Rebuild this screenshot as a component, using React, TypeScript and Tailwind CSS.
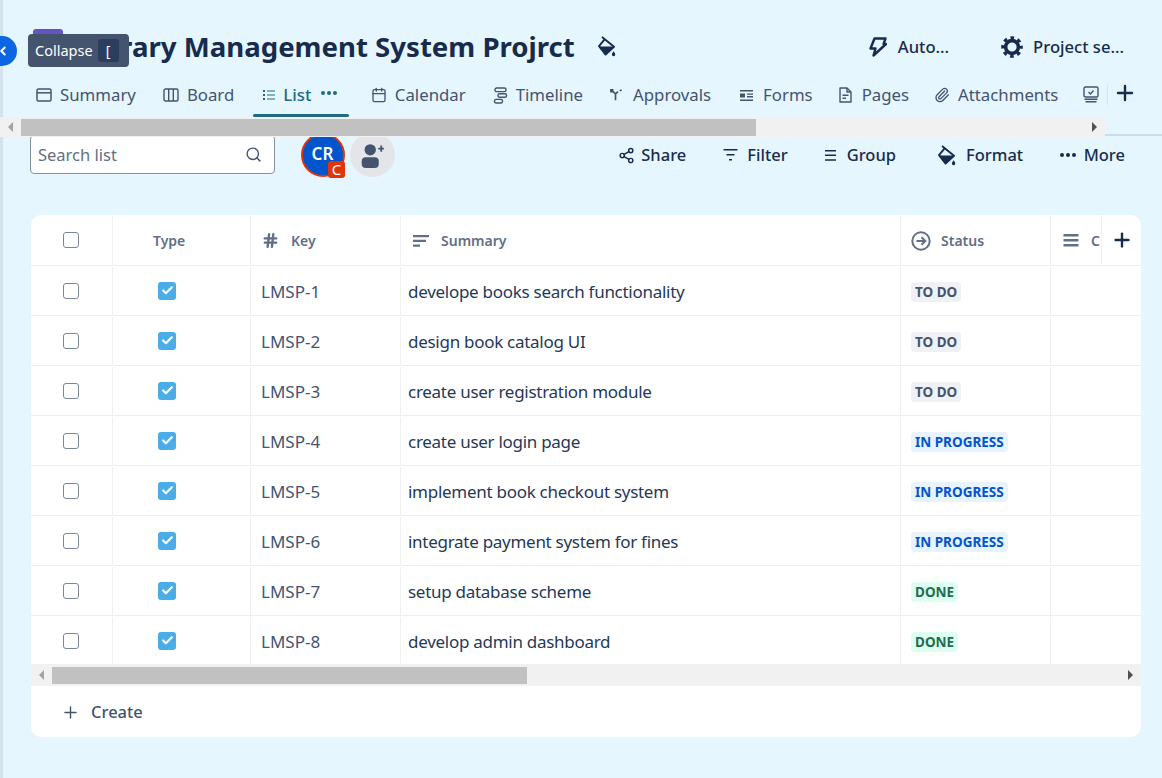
import { Calendar, Check, ChevronLeft, Hash, Paperclip, Plus, Search, Share2 } from "lucide-react";
import type { ReactNode } from "react";

const ROWS = [
  { key: "LMSP-1", summary: "develope books search functionality", status: "TO DO" },
  { key: "LMSP-2", summary: "design book catalog UI", status: "TO DO" },
  { key: "LMSP-3", summary: "create user registration module", status: "TO DO" },
  { key: "LMSP-4", summary: "create user login page", status: "IN PROGRESS" },
  { key: "LMSP-5", summary: "implement book checkout system", status: "IN PROGRESS" },
  { key: "LMSP-6", summary: "integrate payment system for fines", status: "IN PROGRESS" },
  { key: "LMSP-7", summary: "setup database scheme", status: "DONE" },
  { key: "LMSP-8", summary: "develop admin dashboard", status: "DONE" },
];

const STATUS_STYLE: Record<string, string> = {
  "TO DO": "bg-[#f0f1f4] text-[#44546f]",
  "IN PROGRESS": "bg-[#e9f2ff] text-[#0055cc]",
  DONE: "bg-[#dcfff1] text-[#216e4e]",
};

function Bucket({ className }: { className?: string }) {
  return (
    <svg viewBox="0 0 18 21" className={className} fill="none">
      <path d="M4 1 16 10.8 7.6 18.6 1 10.2 6.6 3.4" stroke="currentColor" strokeWidth="1.9" strokeLinejoin="round" />
      <path d="M1 10.6h15L7.6 18.6Z" fill="currentColor" />
      <path d="M15.6 15.2c-1 1.5-1.7 2.4-1.7 3.3a1.7 1.7 0 0 0 3.4 0c0-.9-.7-1.8-1.7-3.3Z" fill="currentColor" />
    </svg>
  );
}

function Bolt({ className }: { className?: string }) {
  return (
    <svg viewBox="0 0 18 20" className={className} fill="none" stroke="currentColor" strokeWidth="2.4" strokeLinejoin="round">
      <path d="M5.5 1.5H16.5L14.6 7H17L4.5 18.5 6.5 11.5H1.5Z" />
    </svg>
  );
}

function Gear({ className }: { className?: string }) {
  return (
    <svg viewBox="0 0 22 22" className={className} fill="none" stroke="currentColor">
      <circle cx="11" cy="11" r="6.4" strokeWidth="3.6" />
      <circle cx="11" cy="11" r="9.2" strokeWidth="3.2" strokeDasharray="3.6 3.63" strokeDashoffset="1.8" />
    </svg>
  );
}

function PanelIcon() {
  return (
    <svg viewBox="0 0 16 14" className="h-[14px] w-4" fill="none" stroke="currentColor" strokeWidth="1.5">
      <rect x="1" y="1" width="14" height="12" rx="1.5" />
      <path d="M1 4.8h14" />
    </svg>
  );
}

function BoardIcon() {
  return (
    <svg viewBox="0 0 16 14" className="h-[14px] w-4" fill="none" stroke="currentColor" strokeWidth="1.4">
      <rect x="1" y="1" width="14" height="12" rx="1.5" />
      <path d="M5.7 1v12M10.3 1v12" />
    </svg>
  );
}

function ListIcon() {
  return (
    <svg viewBox="0 0 12 10" className="h-[10px] w-3" fill="currentColor">
      <path d="M0 0h2v2H0zM4 .4h8v1.2H4zM0 4h2v2H0zM4 4.4h8v1.2H4zM0 8h2v2H0zM4 8.4h8v1.2H4z" />
    </svg>
  );
}

function TimelineIcon() {
  return (
    <svg viewBox="0 0 14 17" className="h-[17px] w-[15px]" fill="none" stroke="currentColor" strokeWidth="1.4">
      <rect x="1.5" y="1" width="11" height="3.6" rx="1.6" />
      <rect x="4.5" y="6.7" width="8.5" height="3.6" rx="1.6" />
      <rect x="1" y="12.4" width="8" height="3.6" rx="1.6" />
    </svg>
  );
}

function ApprovalsIcon() {
  return (
    <svg viewBox="0 0 13 12" className="mr-[2px] h-3 w-[13px]" fill="none" stroke="currentColor" strokeWidth="1.7">
      <path d="M1.5 1.2 5.5 4.8v6.5M5.5 5 8 2.6M9.8 1.8 11.6 1" />
      <path d="M0 0h3.4v3.4H0z" fill="currentColor" stroke="none" />
    </svg>
  );
}

function FormsIcon() {
  return (
    <svg viewBox="0 0 13 11" className="mr-[2px] h-[11px] w-[13px]" fill="currentColor">
      <path d="M0 0h13v1.4H0zM0 3.4h5v4H0zM7 3.4h6v1.3H7zM7 6.1h6v1.3H7zM0 9.6h13V11H0z" />
    </svg>
  );
}

function PagesIcon() {
  return (
    <svg viewBox="0 0 13 16" className="mr-[2px] h-4 w-[13px]" fill="none" stroke="currentColor" strokeWidth="1.4" strokeLinejoin="round">
      <path d="M1 1h7l4 4v10H1Z" />
      <path d="M8 1v4h4M3.5 8.2h6M3.5 11.2h3.5" />
    </svg>
  );
}

function ReportIcon() {
  return (
    <svg viewBox="0 0 16 17" className="h-[17px] w-4" fill="none" stroke="currentColor" strokeWidth="1.4">
      <rect x="1" y="1" width="14" height="10" rx="1.5" />
      <path d="m5.5 6 2 2 3-3.5M1.5 13.2h13M2.5 15.8h11" />
    </svg>
  );
}

function Tab({ icon, label, className, active }: { icon: ReactNode; label: string; className?: string; active?: boolean }) {
  return (
    <div className={`flex shrink-0 items-center ${active ? "text-[#206a83]" : "text-[#44546f]"} ${className ?? ""}`}>
      {icon}
      <span className={`ml-2 text-[16.8px] leading-6 ${active ? "font-medium" : ""}`}>{label}</span>
    </div>
  );
}

function ToolbarButton({ icon, label, className }: { icon: ReactNode; label: string; className?: string }) {
  return (
    <div className={`flex items-center text-[#172b4d] ${className ?? ""}`}>
      {icon}
      <span className="text-[16.5px] font-medium leading-6">{label}</span>
    </div>
  );
}

function Scrollbar({ className, thumb }: { className: string; thumb: string }) {
  return (
    <div className={`flex items-center bg-[#f1f1f1] ${className}`}>
      <span className="ml-[8px] h-0 w-0 shrink-0 border-y-[5px] border-r-[5px] border-y-transparent border-r-[#a3a3a3]" />
      <div className={`h-[17px] bg-[#c1c1c1] ${thumb}`} />
      <span className="ml-auto mr-[8px] h-0 w-0 shrink-0 border-y-[5px] border-l-[5px] border-y-transparent border-l-[#505050]" />
    </div>
  );
}

function Row({ check, type, keyCell, summary, status, last, className }: { check: ReactNode; type: ReactNode; keyCell: ReactNode; summary: ReactNode; status: ReactNode; last?: ReactNode; className: string }) {
  const cell = "flex items-center border-r border-[#eeeff1]";
  return (
    <div className={`grid grid-cols-[82px_138px_150px_500px_150px_1fr] border-b border-[#eeeff1] ${className}`}>
      <div className={`${cell} pl-[32px]`}>{check}</div>
      <div className={`${cell}`}>{type}</div>
      <div className={`${cell} pl-[10px]`}>{keyCell}</div>
      <div className={`${cell} pl-[7px]`}>{summary}</div>
      <div className={`${cell} pl-[10px]`}>{status}</div>
      <div className="flex items-center overflow-hidden pl-[12px]">{last}</div>
    </div>
  );
}

const CHECKBOX = <span className="block h-4 w-4 rounded-[3px] border-[1.5px] border-[#7a869a] bg-white" />;

export default function App() {
  return (
    <div className="relative h-[778px] w-[1162px] overflow-hidden bg-[#e6f6ff] font-['Noto_Sans',sans-serif]">
      {/* sidebar edge */}
      <div className="absolute inset-y-0 left-0 w-[3px] bg-[#d3e4ee]" />

      {/* Title row */}
      <div className="flex h-[80px] items-start pl-[33px] pr-[38px] pt-[29px] text-[#172b4d]">
        <div className="h-9 w-[30px] shrink-0 rounded-t-[3px] bg-[#6554c0]" />
        <h1 className="-mt-[1px] ml-[16px] whitespace-nowrap text-[27.6px] font-bold leading-9">Library Management System Projrct</h1>
        <Bucket className="ml-[23px] mt-[7px] h-[21px] w-[18px]" />
        <div className="ml-auto mt-[6px] flex items-center text-[16.6px] font-medium leading-6">
          <Bolt className="mr-[11px] h-[20px] w-[18px]" />
          Auto...
          <Gear className="ml-[52px] mr-[10px] h-[22px] w-[22px]" />
          Project se...
        </div>
      </div>

      {/* Tabs */}
      <div className="relative flex h-[37px] items-start pl-[36px] pt-[3px]">
        <Tab icon={<PanelIcon />} label="Summary" />
        <Tab icon={<BoardIcon />} label="Board" className="ml-[27px]" />
        <Tab icon={<ListIcon />} label="List" className="ml-[29px]" active />
        <span className="ml-[10px] mt-[8px] flex gap-[2.5px]">
          <i className="h-[3.5px] w-[3.5px] rounded-full bg-[#206a83]" />
          <i className="h-[3.5px] w-[3.5px] rounded-full bg-[#206a83]" />
          <i className="h-[3.5px] w-[3.5px] rounded-full bg-[#206a83]" />
        </span>
        <Tab icon={<Calendar className="h-4 w-4" strokeWidth={2} />} label="Calendar" className="ml-[34px]" />
        <Tab icon={<TimelineIcon />} label="Timeline" className="ml-[27px]" />
        <Tab icon={<ApprovalsIcon />} label="Approvals" className="ml-[27px]" />
        <Tab icon={<FormsIcon />} label="Forms" className="ml-[29px]" />
        <Tab icon={<PagesIcon />} label="Pages" className="ml-[26px]" />
        <Tab icon={<Paperclip className="h-4 w-4" strokeWidth={2} />} label="Attachments" className="ml-[25px]" />
        <div className="ml-[25px] mt-[3px] text-[#44546f]"><ReportIcon /></div>
        <div className="ml-[8px] mt-[2px] h-5 w-px bg-[#d6e6ef]" />
        <Plus className="-mt-[2px] ml-[5px] h-6 w-6 text-[#172b4d]" strokeWidth={2.4} />
        <div className="absolute bottom-0 left-[253px] h-[3px] w-[96px] rounded-sm bg-[#206a83]" />
      </div>

      {/* Tabs scrollbar */}
      <div className="relative z-10 h-[20px] w-[1105px]">
        <Scrollbar className="h-full" thumb="ml-[8px] w-[735px]" />
      </div>
      <div className="absolute left-[1105px] right-0 top-[134px] h-[2px] bg-[#c8dfeb]" />

      {/* Toolbar */}
      <div className="flex h-[78px] items-start pl-[30px] pr-[37px]">
        <div className="-mt-[2px] flex h-[39px] w-[245px] items-center justify-between rounded-[4px] border border-[#8590a2] bg-white pl-[7px] pr-3">
          <span className="pt-[1px] text-[16.5px] text-[#626f86]">Search list</span>
          <Search className="h-[17px] w-[17px] text-[#44546f]" strokeWidth={2} />
        </div>
        <div className="relative -mt-[4px] ml-[26px] flex h-[44px] w-[44px] items-center justify-center rounded-full border-[2.5px] border-[#de350b] bg-[#0055cc] pb-[2px] pr-[1px] text-[17px] font-semibold text-white">
          CR
          <span className="absolute -bottom-[3px] -right-[2px] flex h-[17px] w-[17px] items-center justify-center rounded-[3px] bg-[#de350b] text-[15px] font-normal leading-none">C</span>
        </div>
        <div className="-mt-[4px] ml-[5px] flex h-[44px] w-[45px] items-center justify-center rounded-full bg-[#e4e5e9] text-[#44546f]">
          <svg viewBox="0 0 20 22" className="h-[25px] w-[23px]" fill="currentColor">
            <circle cx="8" cy="6" r="5" />
            <rect x="0.5" y="12.5" width="15" height="9.5" rx="3.6" />
            <path d="M15 4.2h1.9V2.3h1.6v1.9h1.5v1.6h-1.5v1.9h-1.6V5.8H15Z" />
          </svg>
        </div>
        <div className="ml-auto flex items-center pt-[6px]">
          <ToolbarButton icon={<Share2 className="mr-[6px] h-[17px] w-[17px]" strokeWidth={2} />} label="Share" />
          <ToolbarButton
            icon={
              <svg viewBox="0 0 14 12" className="mr-[9px] h-3 w-[15px]" fill="currentColor"><path d="M0 0h14v1.5H0zM3 5h8v1.5H3zM5.5 10h3v1.5h-3z" /></svg>
            }
            label="Filter"
            className="ml-[37px]"
          />
          <ToolbarButton
            icon={
              <svg viewBox="0 0 11 11" className="mr-[11px] h-[11px] w-[11px]" fill="currentColor"><path d="M0 0h11v1.5H0zM0 4.6h11v1.5H0zM0 9.2h11v1.5H0z" /></svg>
            }
            label="Group"
            className="ml-[37px]"
          />
          <ToolbarButton icon={<Bucket className="mr-[10px] h-[21px] w-[18px]" />} label="Format" className="ml-[42px]" />
          <ToolbarButton
            icon={
              <span className="mr-[8px] flex gap-[2.5px]">
                <i className="h-[3.5px] w-[3.5px] rounded-full bg-current" />
                <i className="h-[3.5px] w-[3.5px] rounded-full bg-current" />
                <i className="h-[3.5px] w-[3.5px] rounded-full bg-current" />
              </span>
            }
            label="More"
            className="ml-[37px]"
          />
        </div>
      </div>

      {/* Table card */}
      <div className="ml-[31px] w-[1110px] overflow-hidden rounded-[10px] bg-white">
        <div className="relative">
          <Row
            className="h-[51px] pt-[1px] text-[14px] font-semibold text-[#626f86]"
            check={<span className="-mt-[2px]">{CHECKBOX}</span>}
            type={<span className="ml-[40px]">Type</span>}
            keyCell={
              <>
                <Hash className="ml-[1px] mr-[12px] h-[17px] w-[17px]" strokeWidth={3.4} />
                Key
              </>
            }
            summary={
              <>
                <svg viewBox="0 0 16 12" className="ml-[5px] mr-[12px] h-3 w-[16px]" fill="currentColor"><path d="M0 0h16v2.2H0zM0 4.8h13v2.2H0zM0 9.6h7v2.2H0z" /></svg>
                Summary
              </>
            }
            status={
              <>
                <svg viewBox="0 0 20 20" className="mr-[10px] h-5 w-5" fill="none" stroke="currentColor" strokeWidth="2"><circle cx="10" cy="10" r="8.7" /><path d="M5.5 10h8.5M10.5 6.2l3.8 3.8-3.8 3.8" /></svg>
                Status
              </>
            }
            last={
              <>
                <svg viewBox="0 0 15 13" className="mr-[12px] h-[13px] w-[16px] shrink-0" fill="currentColor"><path d="M0 0h15v2.4H0zM0 5h15v2.4H0zM0 10h15v2.4H0z" /></svg>
                C
              </>
            }
          />
          <div className="absolute bottom-[1px] right-0 top-0 flex w-[40px] items-center justify-center border-l border-[#eeeff1] bg-white text-[#172b4d]">
            <Plus className="h-[22px] w-[22px]" strokeWidth={2.6} />
          </div>
        </div>
        {ROWS.map((r) => (
          <Row
            key={r.key}
            className="h-[50px] pt-[1px] text-[17px] leading-6 tracking-[-0.28px] text-[#253858]"
            check={<span className="-mt-[1px]">{CHECKBOX}</span>}
            type={
              <span className="-mt-[1px] ml-[45px] flex h-[18px] w-[18px] items-center justify-center rounded-[3px] bg-[#4bade8]">
                <Check className="h-[13px] w-[13px] text-white" strokeWidth={4} />
              </span>
            }
            keyCell={<span className="mt-[2px] tracking-normal text-[#44546f]">{r.key}</span>}
            summary={<span className="mt-[2px]">{r.summary}</span>}
            status={<span className={`mt-[2px] rounded-[4px] px-[4px] text-[13.5px] font-bold leading-5 tracking-normal ${STATUS_STYLE[r.status]}`}>{r.status}</span>}
          />
        ))}
        <Scrollbar className="-mt-[2px] relative h-[22px]" thumb="ml-[8px] w-[475px]" />
        <div className="flex h-[51px] items-center pl-[30px] pt-[2px] text-[16.5px] font-medium text-[#44546f]">
          <Plus className="mr-[11px] h-[19px] w-[19px]" strokeWidth={1.8} />
          Create
        </div>
      </div>

      {/* Collapse button + tooltip */}
      <div className="absolute -left-[13px] top-[36px] flex h-[30px] w-[30px] items-center justify-end rounded-full bg-[#0c66e4] pr-[7px] text-white">
        <ChevronLeft className="h-[14px] w-[14px] shrink-0" strokeWidth={3.5} />
      </div>
      <div className="absolute left-[28px] top-[34px] flex h-[33px] w-[101px] items-center rounded-[4px] bg-[#44546f] pl-[7px] text-[14.5px] text-white">
        Collapse
        <span className="ml-[5px] flex h-[23px] w-[21px] items-center justify-center rounded-[3px] bg-[#2c3e5d] text-[14px]">[</span>
      </div>
    </div>
  );
}
